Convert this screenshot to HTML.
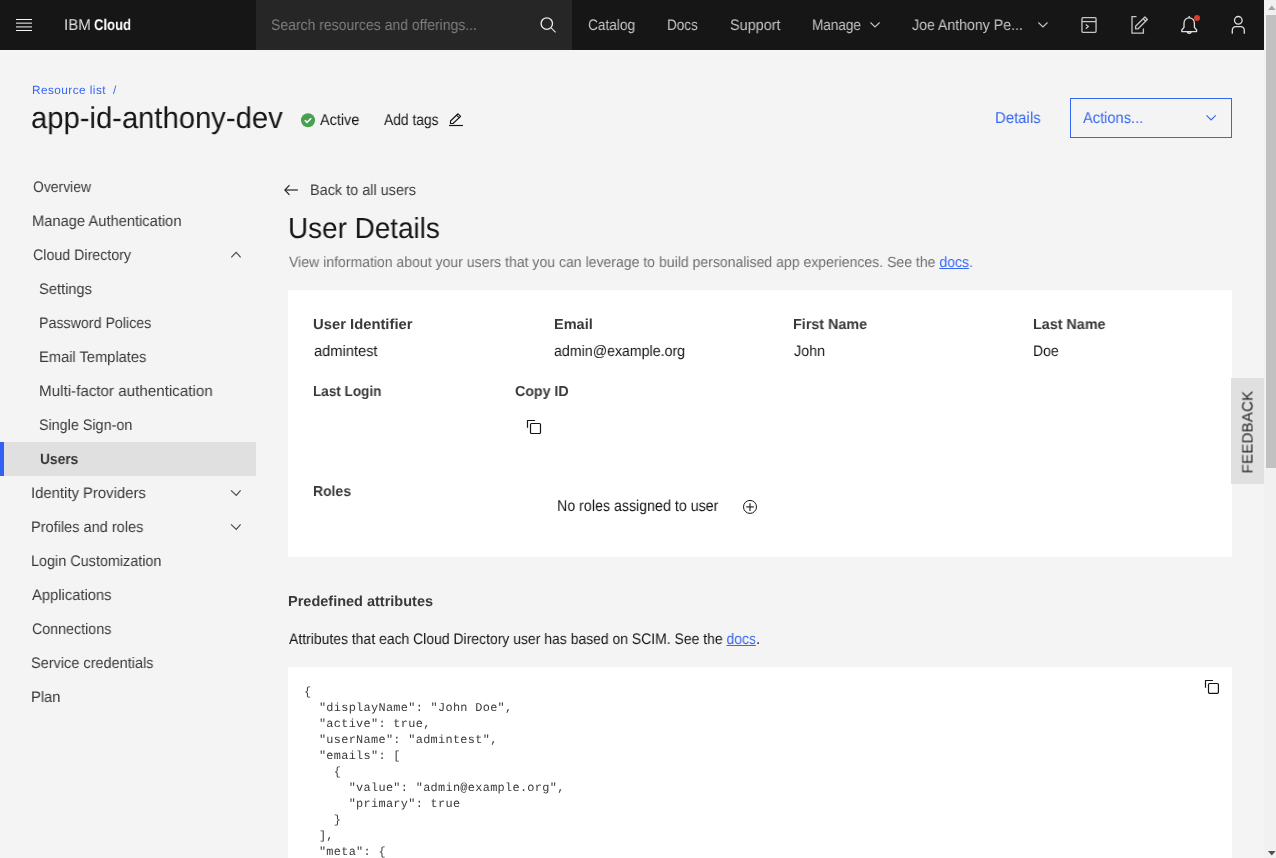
<!DOCTYPE html>
<html><head><meta charset="utf-8">
<style>
html,body{margin:0;padding:0;}
body{width:1276px;height:858px;overflow:hidden;background:#f4f4f4;position:relative;font-family:"Liberation Sans",sans-serif;}
.t{position:absolute;white-space:pre;line-height:normal;will-change:transform;text-rendering:geometricPrecision;}
.a{position:absolute;}
.lnk{color:#3567f4;text-decoration:underline;text-underline-offset:1px;text-decoration-thickness:1px;}
svg{position:absolute;overflow:visible;}
pre{position:absolute;margin:0;will-change:transform;text-rendering:geometricPrecision;font-family:"Liberation Mono",monospace;font-size:11.9px;letter-spacing:0.31px;line-height:16px;color:#393939;}
</style></head>
<body>
<!-- header -->
<div class="a" style="left:0;top:0;width:1264px;height:50px;background:#161616"></div>
<div class="a" style="left:256px;top:0;width:316px;height:50px;background:#262626"></div>
<!-- hamburger -->
<svg style="left:16px;top:17px" width="16" height="16" viewBox="0 0 16 16"><rect x="0" y="2" width="16" height="1" fill="#f4f4f4"/><rect x="0" y="5.6" width="16" height="1.1" fill="#e4e4e4"/><rect x="0" y="9.35" width="16" height="1.1" fill="#e4e4e4"/><rect x="0" y="13" width="16" height="1" fill="#f4f4f4"/></svg>
<!-- search icon -->
<svg style="left:540px;top:17px" width="17" height="17" viewBox="0 0 17 17"><circle cx="6.8" cy="6.6" r="5.7" fill="none" stroke="#ececec" stroke-width="1.35"/><line x1="10.9" y1="10.7" x2="15.6" y2="15.3" stroke="#e0e0e0" stroke-width="1.15"/></svg>
<!-- manage chevron -->
<svg style="left:870px;top:21px" width="12" height="8" viewBox="0 0 12 8"><polyline points="0.5,1.5 5,5.9 9.6,1.5" fill="none" stroke="#c6c6c6" stroke-width="1.15"/></svg>
<svg style="left:1038px;top:21px" width="12" height="8" viewBox="0 0 12 8"><polyline points="0.4,1.5 4.9,5.9 9.5,1.5" fill="none" stroke="#c6c6c6" stroke-width="1.15"/></svg>
<!-- terminal icon -->
<svg style="left:1081px;top:17px" width="16" height="16" viewBox="0 0 16 16"><rect x="0.95" y="0.7" width="14.1" height="14.6" rx="1" fill="none" stroke="#c6c6c6" stroke-width="1.3"/><line x1="0.95" y1="4.6" x2="15.05" y2="4.6" stroke="#c6c6c6" stroke-width="1.3"/><polyline points="4.8,7.4 7.3,9.6 4.8,11.8" fill="none" stroke="#c6c6c6" stroke-width="1.3"/></svg>
<!-- edit icon -->
<svg style="left:1131px;top:16px" width="18" height="18" viewBox="0 0 18 18"><polyline points="5.5,0.7 1,0.7 1,17.2 12.4,17.2 12.4,12.5" fill="none" stroke="#c6c6c6" stroke-width="1.3"/><path d="M4.6,12.8 L4.6,10.3 L13.9,1 L16.4,3.5 L7.1,12.8 Z M12.2,2.7 L14.7,5.2" fill="none" stroke="#c6c6c6" stroke-width="1.3" stroke-linejoin="round"/></svg>
<!-- bell -->
<svg style="left:1181px;top:15px" width="17" height="20" viewBox="0 0 17 20"><path d="M8.2,1 L8.2,2.8 M8.2,2.8 C4.9,2.8 3,5.2 3,8.4 L3,12.4 L0.8,15 L0.8,16.6 L15.6,16.6 L15.6,15 L13.4,12.4 L13.4,8.4 C13.4,5.2 11.5,2.8 8.2,2.8 Z M6.2,16.6 C6.2,18.9 10.2,18.9 10.2,16.6" fill="none" stroke="#e0e0e0" stroke-width="1.3" stroke-linejoin="round"/></svg>
<div class="a" style="left:1193.9px;top:14.9px;width:6.2px;height:6.2px;border-radius:50%;background:#da3b32"></div>
<!-- user -->
<svg style="left:1231px;top:15px" width="16" height="20" viewBox="0 0 16 20"><circle cx="7.3" cy="5.3" r="3.8" fill="none" stroke="#e0e0e0" stroke-width="1.3"/><path d="M1.3,18.8 L1.3,15.5 C1.3,12.8 3,11.6 5,11.6 L9.6,11.6 C11.6,11.6 13.3,12.8 13.3,15.5 L13.3,18.8" fill="none" stroke="#e0e0e0" stroke-width="1.3"/></svg>

<!-- status -->
<svg style="left:301px;top:113px" width="14" height="14" viewBox="0 0 14 14"><circle cx="7" cy="7.2" r="7" fill="#48a050"/><polyline points="3.8,7.3 6,9.4 10.2,5.2" fill="none" stroke="#fff" stroke-width="1.5"/></svg>
<!-- pencil -->
<svg style="left:449px;top:113px" width="15" height="14" viewBox="0 0 15 14"><path d="M1.5,10.5 L1.5,8 L9,0.8 L11.6,3.4 L4,10.5 Z M7.6,2.2 L10.2,4.8" fill="none" stroke="#161616" stroke-width="1.2" stroke-linejoin="round"/><line x1="0" y1="12.5" x2="14" y2="12.5" stroke="#161616" stroke-width="1.2"/></svg>
<!-- actions button -->
<div class="a" style="left:1070px;top:98px;width:160px;height:38px;border:1px solid #3567f4"></div>
<svg style="left:1205px;top:114px" width="12" height="8" viewBox="0 0 12 8"><polyline points="1.5,1.4 6.1,5.9 10.7,1.4" fill="none" stroke="#3567f4" stroke-width="1.2"/></svg>

<!-- sidebar -->
<div class="a" style="left:0;top:442px;width:256px;height:34px;background:#e0e0e0"></div>
<div class="a" style="left:0;top:442px;width:4px;height:34px;background:#3060f4"></div>
<svg style="left:230px;top:250px" width="12" height="8" viewBox="0 0 12 8"><polyline points="1.3,7.3 6.2,2.3 10.6,7.3" fill="none" stroke="#4a4a4a" stroke-width="1.15"/></svg>
<svg style="left:230px;top:489px" width="12" height="8" viewBox="0 0 12 8"><polyline points="1,1.3 6.3,6.4 10.6,1.3" fill="none" stroke="#4a4a4a" stroke-width="1.15"/></svg>
<svg style="left:230px;top:523px" width="12" height="8" viewBox="0 0 12 8"><polyline points="1,1.3 6.3,6.4 10.6,1.3" fill="none" stroke="#4a4a4a" stroke-width="1.15"/></svg>

<!-- back arrow -->
<svg style="left:284px;top:184px" width="15" height="12" viewBox="0 0 15 12"><polyline points="5.5,1.1 0.9,6 5.4,10.8" fill="none" stroke="#262626" stroke-width="1.2"/><line x1="0.9" y1="6" x2="13.9" y2="6" stroke="#262626" stroke-width="1.2"/></svg>

<!-- card -->
<div class="a" style="left:288px;top:290px;width:944px;height:267px;background:#fff"></div>
<svg style="left:527px;top:420px" width="15" height="15" viewBox="0 0 15 15"><polyline points="0.5,7.8 0.5,0.5 8.1,0.5" fill="none" stroke="#161616" stroke-width="1.2" stroke-linejoin="round"/><rect x="3.5" y="3.5" width="10" height="10" rx="1" fill="none" stroke="#161616" stroke-width="1.2"/></svg>
<svg style="left:742px;top:499px" width="16" height="16" viewBox="0 0 16 16"><circle cx="8" cy="7.9" r="6.5" fill="none" stroke="#161616" stroke-width="1"/><line x1="8" y1="4.2" x2="8" y2="11.9" stroke="#2a2a2a" stroke-width="1.2"/><line x1="4.2" y1="7.9" x2="11.9" y2="7.9" stroke="#2a2a2a" stroke-width="1.2"/></svg>

<!-- code box -->
<div class="a" style="left:288px;top:667px;width:944px;height:200px;background:#fff"></div>
<svg style="left:1205px;top:680px" width="15" height="15" viewBox="0 0 15 15"><polyline points="0.5,7.8 0.5,0.5 8,0.5" fill="none" stroke="#161616" stroke-width="1.2" stroke-linejoin="round"/><rect x="3.5" y="3.5" width="9.9" height="9.8" rx="1" fill="none" stroke="#161616" stroke-width="1.2"/></svg>
<pre style="left:303.6px;top:684px">{
  "displayName": "John Doe",
  "active": true,
  "userName": "admintest",
  "emails": [
    {
      "value": "admin@example.org",
      "primary": true
    }
  ],
  "meta": {
</pre>

<!-- feedback -->
<div class="a" style="left:1231px;top:378px;width:33px;height:106px;background:#e0e0e0"></div>
<div class="t" style="left:1248px;top:431.5px;font-size:15px;letter-spacing:0.25px;color:#1f1f1f;transform:translate(-50%,-50%) rotate(-90deg);">FEEDBACK</div>

<!-- scrollbar -->
<div class="a" style="left:1264px;top:0;width:12px;height:858px;background:#f1f1f1"></div>
<div class="a" style="left:1266px;top:15px;width:10px;height:452.5px;background:#c1c1c1"></div>
<svg style="left:1268px;top:5px" width="8" height="5" viewBox="0 0 8 5"><polygon points="0,5 3.8,0.5 7.6,5" fill="#a3a3a3"/></svg>
<svg style="left:1268px;top:851px" width="8" height="5" viewBox="0 0 8 5"><polygon points="0,0 3.8,4.5 7.6,0" fill="#505050"/></svg>

<div class="t" style="left:64.08px;top:17.00px;font-size:15.81px;transform:scaleX(0.9508);transform-origin:0 0;color:#e0e0e0;">IBM</div>
<div class="t" style="left:94.09px;top:17.00px;font-size:15.5px;transform:scaleX(0.8425);transform-origin:0 0;color:#ffffff;font-weight:700;">Cloud</div>
<div class="t" style="left:270.86px;top:17.00px;font-size:15.3px;transform:scaleX(0.9148);transform-origin:0 0;color:#7f7f7f;">Search resources and offerings...</div>
<div class="t" style="left:588.29px;top:17.00px;font-size:15.3px;transform:scaleX(0.8932);transform-origin:0 0;color:#c6c6c6;">Catalog</div>
<div class="t" style="left:666.74px;top:17.00px;font-size:15.3px;transform:scaleX(0.8830);transform-origin:0 0;color:#c6c6c6;">Docs</div>
<div class="t" style="left:729.84px;top:17.00px;font-size:15.3px;transform:scaleX(0.9431);transform-origin:0 0;color:#c6c6c6;">Support</div>
<div class="t" style="left:812.24px;top:17.00px;font-size:15.3px;transform:scaleX(0.8842);transform-origin:0 0;color:#c6c6c6;">Manage</div>
<div class="t" style="left:912.12px;top:17.00px;font-size:15.3px;transform:scaleX(0.9240);transform-origin:0 0;color:#c6c6c6;">Joe Anthony Pe...</div>
<div class="t" style="left:31.53px;top:83.00px;font-size:11.83px;letter-spacing:0.433px;color:#3567f4;">Resource list</div>
<div class="t" style="left:30.73px;top:102.00px;font-size:30.09px;transform:scaleX(0.9709);transform-origin:0 0;color:#161616;">app-id-anthony-dev</div>
<div class="t" style="left:320.01px;top:112.00px;font-size:15.81px;transform:scaleX(0.9149);transform-origin:0 0;color:#161616;">Active</div>
<div class="t" style="left:384.01px;top:112.00px;font-size:15.81px;transform:scaleX(0.8741);transform-origin:0 0;color:#161616;">Add tags</div>
<div class="t" style="left:995.28px;top:110.00px;font-size:15.81px;transform:scaleX(0.9440);transform-origin:0 0;color:#3567f4;">Details</div>
<div class="t" style="left:1083.31px;top:110.00px;font-size:15.81px;transform:scaleX(0.9277);transform-origin:0 0;color:#3567f4;">Actions...</div>
<div class="t" style="left:32.56px;top:179.00px;font-size:15.3px;transform:scaleX(0.9101);transform-origin:0 0;color:#393939;">Overview</div>
<div class="t" style="left:32.05px;top:213.00px;font-size:15.3px;transform:scaleX(0.9603);transform-origin:0 0;color:#393939;">Manage Authentication</div>
<div class="t" style="left:33.06px;top:247.00px;font-size:15.3px;transform:scaleX(0.9294);transform-origin:0 0;color:#393939;">Cloud Directory</div>
<div class="t" style="left:38.93px;top:281.00px;font-size:15.3px;transform:scaleX(0.9593);transform-origin:0 0;color:#393939;">Settings</div>
<div class="t" style="left:39.18px;top:315.00px;font-size:15.3px;transform:scaleX(0.9303);transform-origin:0 0;color:#393939;">Password Polices</div>
<div class="t" style="left:39.15px;top:349.00px;font-size:15.3px;transform:scaleX(0.9593);transform-origin:0 0;color:#393939;">Email Templates</div>
<div class="t" style="left:39.11px;top:383.00px;font-size:15.3px;transform:scaleX(0.9913);transform-origin:0 0;color:#393939;">Multi-factor authentication</div>
<div class="t" style="left:38.94px;top:417.00px;font-size:15.3px;transform:scaleX(0.9376);transform-origin:0 0;color:#393939;">Single Sign-on</div>
<div class="t" style="left:39.97px;top:451.00px;font-size:15px;transform:scaleX(0.9179);transform-origin:0 0;color:#333333;font-weight:700;">Users</div>
<div class="t" style="left:30.94px;top:485.00px;font-size:15.3px;transform:scaleX(0.9717);transform-origin:0 0;color:#393939;">Identity Providers</div>
<div class="t" style="left:31.16px;top:519.00px;font-size:15.3px;transform:scaleX(0.9511);transform-origin:0 0;color:#393939;">Profiles and roles</div>
<div class="t" style="left:31.17px;top:553.00px;font-size:15.3px;transform:scaleX(0.9414);transform-origin:0 0;color:#393939;">Login Customization</div>
<div class="t" style="left:32.30px;top:587.00px;font-size:15.3px;transform:scaleX(0.9646);transform-origin:0 0;color:#393939;">Applications</div>
<div class="t" style="left:31.55px;top:621.00px;font-size:15.3px;transform:scaleX(0.9320);transform-origin:0 0;color:#393939;">Connections</div>
<div class="t" style="left:30.94px;top:655.00px;font-size:15.3px;transform:scaleX(0.9477);transform-origin:0 0;color:#393939;">Service credentials</div>
<div class="t" style="left:31.14px;top:689.00px;font-size:15.3px;transform:scaleX(0.9648);transform-origin:0 0;color:#393939;">Plan</div>
<div class="t" style="left:309.57px;top:182.00px;font-size:15.3px;transform:scaleX(0.9448);transform-origin:0 0;color:#393939;">Back to all users</div>
<div class="t" style="left:288.06px;top:213.00px;font-size:29.07px;transform:scaleX(0.9593);transform-origin:0 0;color:#161616;">User Details</div>
<div class="t" style="left:289.10px;top:255.00px;font-size:14.79px;transform:scaleX(0.9505);transform-origin:0 0;color:#6f6f6f;">View information about your users that you can leverage to build personalised app experiences. See the <u class="lnk">docs</u>.</div>
<div class="t" style="left:313.48px;top:317.00px;font-size:14.5px;transform:scaleX(1.0207);transform-origin:0 0;color:#393939;font-weight:700;">User Identifier</div>
<div class="t" style="left:553.70px;top:317.00px;font-size:14.5px;transform:scaleX(1.0000);transform-origin:0 0;color:#393939;font-weight:700;">Email</div>
<div class="t" style="left:793.31px;top:317.00px;font-size:14.5px;transform:scaleX(0.9878);transform-origin:0 0;color:#393939;font-weight:700;">First Name</div>
<div class="t" style="left:1033.11px;top:317.00px;font-size:14.5px;transform:scaleX(0.9889);transform-origin:0 0;color:#393939;font-weight:700;">Last Name</div>
<div class="t" style="left:313.83px;top:343.00px;font-size:15.3px;transform:scaleX(0.9576);transform-origin:0 0;color:#161616;">admintest</div>
<div class="t" style="left:553.94px;top:343.00px;font-size:15.3px;transform:scaleX(0.9271);transform-origin:0 0;color:#161616;">admin@example.org</div>
<div class="t" style="left:794.11px;top:343.00px;font-size:15.3px;transform:scaleX(0.9324);transform-origin:0 0;color:#161616;">John</div>
<div class="t" style="left:1033.00px;top:343.00px;font-size:15.3px;transform:scaleX(0.9175);transform-origin:0 0;color:#161616;">Doe</div>
<div class="t" style="left:313.37px;top:384.00px;font-size:14.5px;transform:scaleX(0.9329);transform-origin:0 0;color:#393939;font-weight:700;">Last Login</div>
<div class="t" style="left:514.61px;top:384.00px;font-size:14.5px;transform:scaleX(0.9795);transform-origin:0 0;color:#393939;font-weight:700;">Copy ID</div>
<div class="t" style="left:313.34px;top:484.00px;font-size:14.5px;transform:scaleX(0.9631);transform-origin:0 0;color:#393939;font-weight:700;">Roles</div>
<div class="t" style="left:556.54px;top:498.00px;font-size:15.81px;transform:scaleX(0.9009);transform-origin:0 0;color:#161616;">No roles assigned to user</div>
<div class="t" style="left:287.60px;top:594.00px;font-size:14.5px;transform:scaleX(0.9993);transform-origin:0 0;color:#393939;font-weight:700;">Predefined attributes</div>
<div class="t" style="left:288.50px;top:631.00px;font-size:15.3px;transform:scaleX(0.9124);transform-origin:0 0;color:#161616;">Attributes that each Cloud Directory user has based on SCIM. See the <u class="lnk">docs</u>.</div>
<div class="t" style="left:113.43px;top:83.00px;font-size:11.83px;letter-spacing:0.000px;color:#3567f4;">/</div>
</body></html>
